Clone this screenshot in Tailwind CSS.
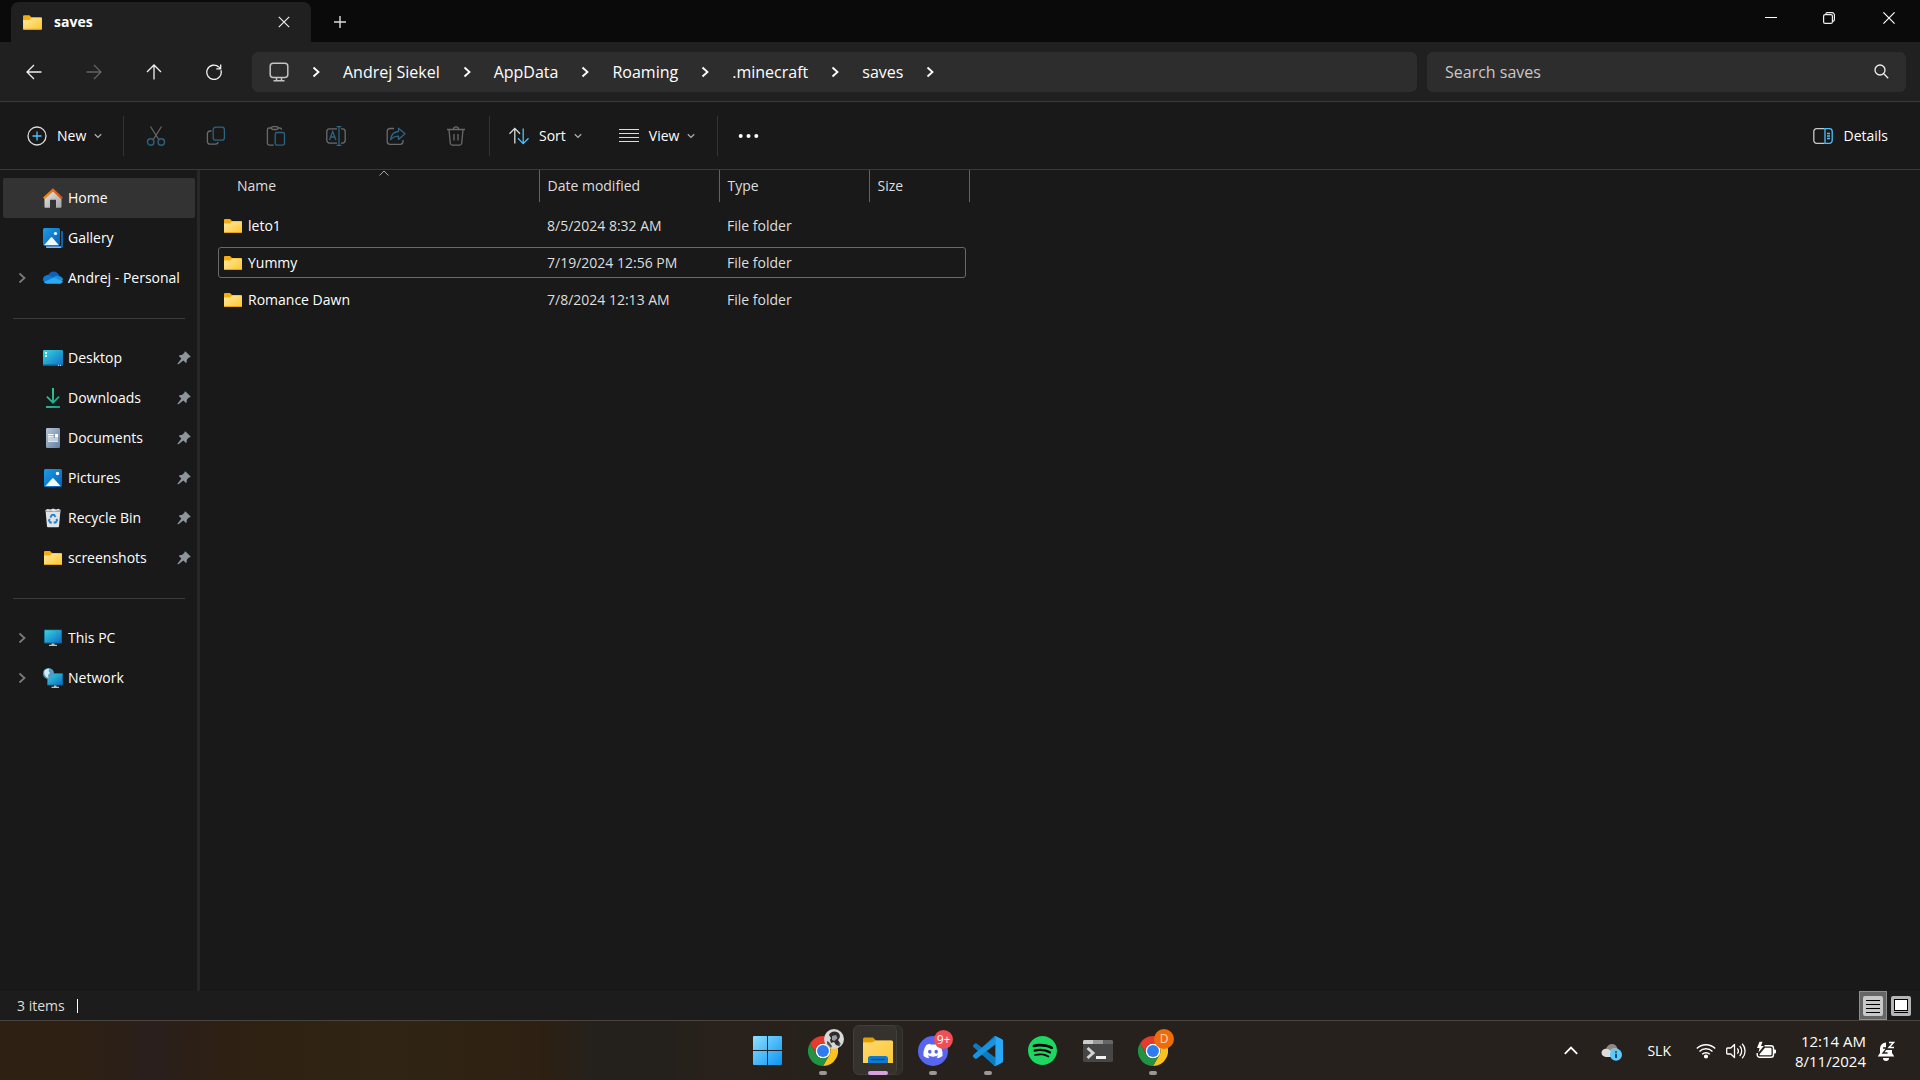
<!DOCTYPE html>
<html lang="en">
<head>
    <meta charset="UTF-8">
    <meta name="viewport" content="width=device-width, initial-scale=1.0">
    <title>saves - File Explorer</title>
    <script src="https://cdn.jsdelivr.net/npm/@tailwindcss/browser@4"></script>
</head>
<body class="h-screen flex flex-col overflow-hidden bg-[#191919] text-white text-sm font-['Open_Sans','Noto_Sans',sans-serif]">

    <!-- Shared icons -->
    <svg class="absolute w-0 h-0" aria-hidden="true">
        <defs>
            <linearGradient id="gFolder" x1="0" y1="0" x2="1" y2="1"><stop offset="0" stop-color="#ffe9a0"/><stop offset="1" stop-color="#fdc62f"/></linearGradient>
            <linearGradient id="gBlue" x1="0" y1="0" x2="1" y2="1"><stop offset="0" stop-color="#1c9ce8"/><stop offset="1" stop-color="#0560b4"/></linearGradient>
            <linearGradient id="gScreen" x1="0" y1="0" x2="1" y2="1"><stop offset="0" stop-color="#36d5dc"/><stop offset="1" stop-color="#0c6cc8"/></linearGradient>
            <linearGradient id="gHouse" x1="0" y1="0" x2="1" y2="1"><stop offset="0" stop-color="#e8e8e8"/><stop offset="1" stop-color="#a2a2a2"/></linearGradient>
            <linearGradient id="gRoof" x1="0" y1="0" x2="1" y2="0"><stop offset="0" stop-color="#f5921b"/><stop offset="1" stop-color="#d8480a"/></linearGradient>
            <linearGradient id="gDoc" x1="0" y1="0" x2="1" y2="1"><stop offset="0" stop-color="#b4c5d9"/><stop offset="1" stop-color="#6480a0"/></linearGradient>
            <linearGradient id="gDown" x1="0" y1="0" x2="1" y2="1"><stop offset="0" stop-color="#3bd18d"/><stop offset="1" stop-color="#0f9c94"/></linearGradient>
            <linearGradient id="gWin" gradientUnits="userSpaceOnUse" x1="0" y1="0" x2="29" y2="29"><stop offset="0" stop-color="#8fe0ff"/><stop offset="1" stop-color="#0a93f5"/></linearGradient>
        </defs>
        <symbol id="folder" viewBox="0 0 20 20">
            <path d="M1 4a1 1 0 0 1 1-1h5l2 2h9a1 1 0 0 1 1 1v3H1z" fill="#f7ac0e"/>
            <path d="M1 7.500h6l2-2h9.200a.8.800 0 0 1 .8.800V16a1 1 0 0 1-1 1H2a1 1 0 0 1-1-1z" fill="url(#gFolder)"/>
            <path d="M1 16h18a1 1 0 0 1-1 1H2a1 1 0 0 1-1-1z" fill="#e3a31c"/>
        </symbol>
        <symbol id="pin" viewBox="0 0 14 14">
            <path d="M8.500.6 13.400 5.300c.3.300.2.900-.3 1l-1.300.2-2.100 2.400c.3 1.300 0 2.300-.7 3.200L6.300 9.400 1.200 13.400.5 12.800 4.400 7.500 1.700 4.900c.8-.8 2-1.100 3.200-.8l2.400-2 .3-1.200c.1-.4.600-.6.900-.3z" fill="#8d969c"/>
        </symbol>
        <symbol id="chev-right" viewBox="0 0 8 12">
            <path d="M1.500 1.500 6.500 6l-5 4.500" fill="none" stroke="currentColor" stroke-width="1.800"/>
        </symbol>
        <symbol id="chev-down" viewBox="0 0 8 6">
            <path d="M.8 1.300 4 4.400l3.200-3.100" fill="none" stroke="#b0b0b0" stroke-width="1.300"/>
        </symbol>
        <symbol id="picture" viewBox="0 0 18 18">
            <rect width="18" height="18" rx="1.500" fill="url(#gBlue)"/>
            <path d="M1.500 17 8 9.800c.6-.6 1.300-.6 1.900 0L16.500 17z" fill="#f2f8ff"/>
            <circle cx="13.500" cy="4.500" r="1.700" fill="#fff"/>
        </symbol>
        <symbol id="chrome" viewBox="0 0 48 48">
            <circle cx="24" cy="24" r="12" fill="#fff"/>
            <path d="M24,12H44.781a23.994,23.994,0,0,0-41.564.003L13.608,30l.009-.002A11.985,11.985,0,0,1,24,12Z" fill="#e33b2e"/>
            <path d="M34.391,30.003,24.001,48A23.994,23.994,0,0,0,44.780,12.003H23.999l-.003.009A11.985,11.985,0,0,1,34.391,30.003Z" fill="#fcc31e"/>
            <path d="M13.609,30.003,3.218,12.006A23.994,23.994,0,0,0,24.003,48L34.393,30.003l-.007-.007a11.985,11.985,0,0,1-20.778.007Z" fill="#229342"/>
            <circle cx="24" cy="24" r="9.500" fill="#2f7bf0"/>
        </symbol>
    </svg>

    <!-- Title bar -->
    <header class="flex justify-between h-[42px] shrink-0 bg-[#0a0a0a]">
        <div class="flex pl-[11px] pt-[2px]">
            <div class="flex items-center w-[300px] pl-[11px] pr-[15px] rounded-t-lg bg-[#202020]">
                <svg class="size-[21px]"><use href="#folder"/></svg>
                <h1 class="flex-1 pl-[11px] font-bold">saves</h1>
                <button class="grid place-items-center size-6" aria-label="Close tab">
                    <svg class="size-3" viewBox="0 0 12 12" fill="none" stroke="#eee" stroke-width="1.200"><path d="m.8.800 10.400 10.400M11.200.8.800 11.200"/></svg>
                </button>
            </div>
            <button class="grid place-items-center w-[58px]" aria-label="New tab">
                <svg class="size-3" viewBox="0 0 12 12" stroke="#ddd" stroke-width="1.400"><path d="M6 0v12M0 6h12"/></svg>
            </button>
        </div>
        <div class="flex h-9">
            <button class="grid place-items-center w-[58px]" aria-label="Minimize">
                <svg class="size-3" viewBox="0 0 12 12"><path d="M0 5h12v1H0z" fill="#fff"/></svg>
            </button>
            <button class="grid place-items-center w-[58px]" aria-label="Restore">
                <svg class="size-3" viewBox="0 0 12 12" fill="none" stroke="#eee" stroke-width="1.200"><rect x=".6" y="2.600" width="8.800" height="8.800" rx="1.500"/><path d="M2.800 2.600V2.200A1.600 1.600 0 0 1 4.400.6H9a2.400 2.400 0 0 1 2.400 2.400v4.600A1.600 1.600 0 0 1 9.800 9.200h-.4"/></svg>
            </button>
            <button class="grid place-items-center w-[62px]" aria-label="Close">
                <svg class="size-3" viewBox="0 0 12 12" fill="none" stroke="#fff" stroke-width="1.200"><path d="m.4.400 11.200 11.200M11.600.4.400 11.600"/></svg>
            </button>
        </div>
    </header>

    <!-- Navigation row -->
    <div class="flex items-center h-[60px] shrink-0 pl-1 pr-[14px] bg-[#202020] border-b border-[#3a3a3a]">
        <button class="grid place-items-center w-[60px] h-10" aria-label="Back">
            <svg class="size-4" viewBox="0 0 16 16" fill="none" stroke="#f0f0f0" stroke-width="1.300"><path d="M15.500 8H1M8 1 1 8l7 7"/></svg>
        </button>
        <button class="grid place-items-center w-[60px] h-10" aria-label="Forward">
            <svg class="size-4" viewBox="0 0 16 16" fill="none" stroke="#636363" stroke-width="1.300"><path d="M.5 8H15M8 1l7 7-7 7"/></svg>
        </button>
        <button class="grid place-items-center w-[60px] h-10" aria-label="Up">
            <svg class="size-4" viewBox="0 0 16 16" fill="none" stroke="#f0f0f0" stroke-width="1.300"><path d="M8 15.500V1M1 8l7-7 7 7"/></svg>
        </button>
        <button class="grid place-items-center w-[60px] h-10" aria-label="Refresh">
            <svg class="size-4" viewBox="0 0 16 16" fill="none" stroke="#f0f0f0" stroke-width="1.300"><path d="M14.900 6.200A7.200 7.200 0 1 1 12.800 2.900L14.500 4.600M14.700.500v4.300h-4.400"/></svg>
        </button>
        <nav class="flex items-center flex-1 h-10 ml-2 pl-[17px] rounded-md bg-[#2d2d2d] text-base" aria-label="Address">
            <svg class="size-5" viewBox="0 0 20 20" fill="none" stroke="#c4c4c4" stroke-width="1.500"><rect x="1.200" y="1.200" width="17.600" height="14.400" rx="3"/><path d="M7.500 15.600v2.600M12.500 15.600v2.600M4.500 18.700h11"/></svg>
            <span class="grid place-items-center w-[54px]"><svg class="w-2 h-3"><use href="#chev-right"/></svg></span>
            <a href="#">Andrej Siekel</a>
            <span class="grid place-items-center w-[54px]"><svg class="w-2 h-3"><use href="#chev-right"/></svg></span>
            <a href="#">AppData</a>
            <span class="grid place-items-center w-[54px]"><svg class="w-2 h-3"><use href="#chev-right"/></svg></span>
            <a href="#">Roaming</a>
            <span class="grid place-items-center w-[54px]"><svg class="w-2 h-3"><use href="#chev-right"/></svg></span>
            <a href="#">.minecraft</a>
            <span class="grid place-items-center w-[54px]"><svg class="w-2 h-3"><use href="#chev-right"/></svg></span>
            <a href="#">saves</a>
            <span class="grid place-items-center w-[54px]"><svg class="w-2 h-3"><use href="#chev-right"/></svg></span>
        </nav>
        <label class="flex items-center w-[479px] h-10 ml-[10px] pl-[18px] pr-[17px] rounded-md bg-[#2d2d2d]">
            <input type="text" placeholder="Search saves" aria-label="Search saves" class="flex-1 min-w-0 bg-transparent text-base placeholder:text-[#c8c8c8] outline-none">
            <svg class="size-[15px]" viewBox="0 0 15 15" fill="none" stroke="#f0f0f0" stroke-width="1.300"><circle cx="6" cy="6" r="5"/><path d="m9.800 9.800 4.400 4.400"/></svg>
        </label>
    </div>

    <!-- Command bar -->
    <div class="flex items-center h-[68px] shrink-0 pl-[27px] pr-8 border-b border-[#3a3a3a]">
        <button class="flex items-center w-24">
            <svg class="size-5" viewBox="0 0 20 20" fill="none" stroke-width="1.300"><circle cx="10" cy="10" r="9" stroke="#dcdcdc"/><path d="M10 5.500v9M5.500 10h9" stroke="#4cc2ff"/></svg>
            <span class="pl-[10px] pr-2">New</span>
            <svg class="w-2 h-[6px]"><use href="#chev-down"/></svg>
        </button>
        <span class="w-px h-10 bg-[#333]"></span>
        <div class="flex pl-[2px] pr-[3px]">
            <button disabled class="grid place-items-center w-[60px] h-10" aria-label="Cut">
                <svg class="size-5" viewBox="0 0 20 20" fill="none" stroke-width="1.200"><path d="m4.500.500 8.200 13M15.500.500l-8.200 13" stroke="#6a6a6a"/><g stroke="#2d6484" stroke-width="1.400"><circle cx="4.700" cy="16" r="3.200"/><circle cx="15.300" cy="16" r="3.200"/></g></svg>
            </button>
            <button disabled class="grid place-items-center w-[60px] h-10" aria-label="Copy">
                <svg class="size-5" viewBox="0 0 20 20" fill="none" stroke-width="1.300"><path d="M5.500 5H4a2.600 2.600 0 0 0-2.600 2.600v8A2.600 2.600 0 0 0 4 18.200h5.500A3 3 0 0 0 12.300 16" stroke="#6a6a6a"/><rect x="7.200" y="1.200" width="11.200" height="13" rx="2.500" stroke="#2d6484"/></svg>
            </button>
            <button disabled class="grid place-items-center w-[60px] h-10" aria-label="Paste">
                <svg class="size-5" viewBox="0 0 20 20" fill="none" stroke-width="1.300"><path d="M6 2H3.200a1.800 1.800 0 0 0-1.800 1.800v13.500A1.800 1.800 0 0 0 3.200 19.100h4.500M11.500 2h2.200a1.800 1.800 0 0 1 1.800 1.800" stroke="#6a6a6a"/><rect x="5.500" y=".7" width="6.500" height="2.800" rx="1.400" stroke="#6a6a6a"/><rect x="9.200" y="6.500" width="9.300" height="12.600" rx="1.800" stroke="#2d6484"/></svg>
            </button>
            <button disabled class="grid place-items-center w-[60px] h-10" aria-label="Rename">
                <svg class="size-5" viewBox="0 0 20 20" fill="none" stroke-width="1.300"><path d="M11 2.900H3.600A2.800 2.800 0 0 0 .8 5.700v8.600a2.800 2.800 0 0 0 2.800 2.800H11M15 2.900h1.400a2.800 2.800 0 0 1 2.800 2.800v8.600a2.800 2.800 0 0 1-2.800 2.800H15" stroke="#6a6a6a"/><path d="M10.500.7h5M10.500 19.300h5M13 .7v18.600M3.500 14 6.700 5.500 9.900 14M4.600 11h4.200" stroke="#2d6484"/></svg>
            </button>
            <button disabled class="grid place-items-center w-[60px] h-10" aria-label="Share">
                <svg class="size-5" viewBox="0 0 20 20" fill="none" stroke-width="1.300" stroke-linejoin="round"><path d="M8 2.500H4A2.800 2.800 0 0 0 1.200 5.300v10.200A2.800 2.800 0 0 0 4 18.300h10.200a2.800 2.800 0 0 0 2.800-2.800V14" stroke="#6a6a6a"/><path d="M12.500 2.200 19 7.800l-6.500 5.600v-3.300c-3.200 0-5.600.8-7.800 3.400.4-4.800 3-7.600 7.800-8z" stroke="#2d6484"/></svg>
            </button>
            <button disabled class="grid place-items-center w-[60px] h-10" aria-label="Delete">
                <svg class="size-5" viewBox="0 0 20 20" fill="none" stroke="#6a6a6a" stroke-width="1.300"><path d="M1 3.500h18M7.500 3.300a2.500 2.500 0 0 1 5 0M3 3.500l1.300 13.800a2 2 0 0 0 2 1.800h7.400a2 2 0 0 0 2-1.800L17 3.500M8 8v6.500M12 8v6.500"/></svg>
            </button>
        </div>
        <span class="w-px h-10 bg-[#333]"></span>
        <button class="flex items-center ml-[19px]">
            <svg class="size-5" viewBox="0 0 20 20" fill="none" stroke-width="1.300"><path d="M5.800 17.500V2.500M.5 7.700l5.300-5.300L11 7.700" stroke="#dcdcdc"/><path d="M14.200 2.500v15M9 12.300l5.200 5.300 5.300-5.300" stroke="#4cc2ff"/></svg>
            <span class="pl-[10px] pr-2">Sort</span>
            <svg class="w-2 h-[6px]"><use href="#chev-down"/></svg>
        </button>
        <button class="flex items-center ml-[37px]">
            <svg class="size-5" viewBox="0 0 20 20" stroke="#dcdcdc"><path d="M0 3.500h20M0 7.500h20M0 11.500h20M0 15.500h20"/></svg>
            <span class="pl-[10px] pr-2">View</span>
            <svg class="w-2 h-[6px]"><use href="#chev-down"/></svg>
        </button>
        <span class="w-px h-10 ml-[22px] bg-[#333]"></span>
        <button class="ml-5" aria-label="See more">
            <svg class="w-[21px] h-5" viewBox="0 0 21 20" fill="#fff"><circle cx="2.700" cy="10" r="2"/><circle cx="10.500" cy="10" r="2"/><circle cx="18.300" cy="10" r="2"/></svg>
        </button>
        <button class="flex items-center gap-[10px] ml-auto">
            <svg class="size-5" viewBox="0 0 20 20" fill="none" stroke-width="1.300"><path d="M11.500 2.700H3.600A2.800 2.800 0 0 0 .8 5.500v9a2.800 2.800 0 0 0 2.800 2.800h7.900" stroke="#c8c8c8"/><path d="M12 2.700h4.400a2.800 2.800 0 0 1 2.800 2.800v9a2.800 2.800 0 0 1-2.800 2.800H12zM14 7.500h3M14 10h3M14 12.500h3" stroke="#4cc2ff"/></svg>
            Details
        </button>
    </div>

    <!-- Sidebar + file list -->
    <main class="flex flex-1 min-h-0">
        <aside class="w-[200px] shrink-0 pt-2 pl-[3px] pr-[2px] border-r-3 border-[#272727]">
            <ul>
                <li class="flex items-center h-10 pl-10 gap-[5px] rounded-xs bg-[#333]">
                    <svg class="size-5" viewBox="0 0 20 20"><path d="M1.500 9.500 10 2l8.500 7.500v9.300a1 1 0 0 1-1 1H13v-8H7v8H2.500a1 1 0 0 1-1-1z" fill="url(#gHouse)"/><path d="M.9 10.300 10 1.800l9.100 8.500" fill="none" stroke="url(#gRoof)" stroke-width="2.400"/></svg>
                    <a href="#">Home</a>
                </li>
                <li class="flex items-center h-10 pl-10 gap-[5px]">
                    <svg class="size-5" viewBox="0 0 20 20"><path d="M18 3h1a1 1 0 0 1 1 1v14.500a1.500 1.500 0 0 1-1.500 1.500H4a1 1 0 0 1-1-1v-1h14a1 1 0 0 0 1-1z" fill="#0f62ae"/><path d="M3 18.500h15V20H4a1 1 0 0 1-1-1z" fill="#7fb9ec"/><rect width="17" height="17.500" rx="1.500" fill="url(#gBlue)"/><path d="M1 17.200 7.600 9.800c.6-.6 1.200-.6 1.800 0L16 17.200z" fill="#f2f8ff"/><circle cx="12.500" cy="5.500" r="1.600" fill="#fff"/></svg>
                    <a href="#">Gallery</a>
                </li>
                <li class="flex items-center h-10 pl-[15px] gap-[5px]">
                    <svg class="w-2 h-3 mr-3 text-[#7a7a7a]"><use href="#chev-right"/></svg>
                    <svg class="size-5" viewBox="0 0 20 20"><path d="M5 7.500C6.200 4.800 8.600 3.200 11 3.500c2.700.3 4.700 2 5.300 4.500L9 12z" fill="#0f5fb8"/><path d="M4.500 15.500A4.400 4.400 0 0 1 0 11.300C0 8.800 2 7 4.400 6.900c1.500 0 2.500.4 3.600 1.200l5 3.400z" fill="#0f78d4"/><path d="M10 9.600c1.400-1.200 3.200-1.900 5.600-1.700 2.600.2 4.400 1.900 4.400 4.200l-4 2z" fill="#1790df"/><path d="m10.500 9.400 9.400 3.600a3.500 3.500 0 0 1-3.500 2.800H4.300c-1.500 0-2.600-.7-3.300-1.700z" fill="#2aaaf0"/></svg>
                    <a href="#" class="whitespace-nowrap">Andrej - Personal</a>
                </li>
            </ul>
            <div class="flex items-center h-10 px-[10px]"><hr class="w-full border-[#3c3c3c]"></div>
            <ul>
                <li class="flex items-center h-10 pl-10 pr-1 gap-[5px]">
                    <svg class="size-5" viewBox="0 0 20 20"><rect y="2" width="20" height="16" rx="1.200" fill="url(#gScreen)"/><path d="M0 16.500h20v.5a1 1 0 0 1-1 1H1a1 1 0 0 1-1-1z" fill="#0d5c8c"/><path d="M2 4h2v2H2zM2 7h2v2H2zM15 16.800h1v1h-1zM17 16.800h1v1h-1z" fill="#e9fbff"/></svg>
                    <a href="#" class="flex-1">Desktop</a>
                    <svg class="size-[14px]"><use href="#pin"/></svg>
                </li>
                <li class="flex items-center h-10 pl-10 pr-1 gap-[5px]">
                    <svg class="size-5" viewBox="0 0 20 20"><path d="M9 0h2v12.500l4.500-4.500 1.200 1.300L10 16 3.300 9.300 4.500 8 9 12.500zM3 18h14v2H3z" fill="url(#gDown)"/></svg>
                    <a href="#" class="flex-1">Downloads</a>
                    <svg class="size-[14px]"><use href="#pin"/></svg>
                </li>
                <li class="flex items-center h-10 pl-10 pr-1 gap-[5px]">
                    <svg class="size-5" viewBox="0 0 20 20"><rect x="3" width="14" height="20" rx="1.200" fill="url(#gDoc)"/><path d="M5 6h5.500v1.200H5zM5 8.200h5.500v1.200H5zM12 6h3v3.400h-3zM5 10.400h10v1.200H5zM5 12.600h10v1.200H5z" fill="#fff"/></svg>
                    <a href="#" class="flex-1">Documents</a>
                    <svg class="size-[14px]"><use href="#pin"/></svg>
                </li>
                <li class="flex items-center h-10 pl-10 pr-1 gap-[5px]">
                    <svg class="size-5" viewBox="0 0 20 20"><use href="#picture" x="1" y="1" width="18" height="18"/></svg>
                    <a href="#" class="flex-1">Pictures</a>
                    <svg class="size-[14px]"><use href="#pin"/></svg>
                </li>
                <li class="flex items-center h-10 pl-10 pr-1 gap-[5px]">
                    <svg class="size-5" viewBox="0 0 20 20"><path d="m2.500 2 2-1 3 .5 2.500-1 3 1 2.500-.7 2 1.200L16 18.500a1 1 0 0 1-1 .8H5a1 1 0 0 1-1-.8z" fill="#dfe3e6"/><path d="m2.500 2 2.500 1.200L8 2.500l3 .9 3-.9 3.500-.5-.3 2H2.800z" fill="#9da3a8"/><path d="M7.300 9.500 9 6.900h2.200l1.300 2M13.400 10.800l.6 1.500-1.400 2.200h-2M8.800 14.500H7.200L6 12.400l.7-1.500" fill="none" stroke="#1683d8" stroke-width="1.800"/></svg>
                    <a href="#" class="flex-1">Recycle Bin</a>
                    <svg class="size-[14px]"><use href="#pin"/></svg>
                </li>
                <li class="flex items-center h-10 pl-10 pr-1 gap-[5px]">
                    <svg class="size-5"><use href="#folder"/></svg>
                    <a href="#" class="flex-1">screenshots</a>
                    <svg class="size-[14px]"><use href="#pin"/></svg>
                </li>
            </ul>
            <div class="flex items-center h-10 px-[10px]"><hr class="w-full border-[#3c3c3c]"></div>
            <ul>
                <li class="flex items-center h-10 pl-[15px] gap-[5px]">
                    <svg class="w-2 h-3 mr-3 text-[#7a7a7a]"><use href="#chev-right"/></svg>
                    <svg class="size-5" viewBox="0 0 20 20"><rect x="1" y="1.500" width="18" height="14" rx=".8" fill="#0f5f86"/><rect x="1.700" y="2.200" width="16.600" height="12.400" fill="url(#gScreen)"/><path d="M8.500 15.500h3v1.200H14V18H6v-1.300h2.500z" fill="#b9c4cc"/></svg>
                    <a href="#">This PC</a>
                </li>
                <li class="flex items-center h-10 pl-[15px] gap-[5px]">
                    <svg class="w-2 h-3 mr-3 text-[#7a7a7a]"><use href="#chev-right"/></svg>
                    <svg class="size-5" viewBox="0 0 20 20"><rect x="4" y="5" width="16" height="12.500" rx=".8" fill="#0f5f86"/><rect x="4.700" y="5.700" width="14.600" height="11" fill="url(#gScreen)"/><path d="M11 17.500h2.500v1.200H16V20H8.500v-1.300H11z" fill="#b9c4cc"/><circle cx="5.500" cy="5.500" r="5.500" fill="#4f9fc6"/><path d="M1.500 2.500C3 .8 5 .5 6.500.8L5.500 3l1.500 2-2 2 .5 3C2.500 9 .5 6 1.500 2.500z" fill="#d4ebf5"/></svg>
                    <a href="#">Network</a>
                </li>
            </ul>
        </aside>

        <section class="flex-1 pl-[15px]">
            <table class="table-fixed w-[754px] text-left text-[#dedede]">
                <colgroup><col class="w-[324px]"><col class="w-[180px]"><col class="w-[150px]"><col class="w-[100px]"></colgroup>
                <thead>
                    <tr class="h-8">
                        <th class="relative pl-[22px] font-normal border-r border-[#636363]">
                            Name
                            <svg class="absolute top-0 left-[164px] w-[10px] h-[6px]" viewBox="0 0 10 6" fill="none" stroke="#a8a8a8"><path d="M.5 5.500 5 1l4.500 4.500"/></svg>
                        </th>
                        <th class="pl-2 font-normal border-r border-[#636363]">Date modified</th>
                        <th class="pl-2 font-normal border-r border-[#636363]">Type</th>
                        <th class="pl-2 font-normal border-r border-[#636363]">Size</th>
                    </tr>
                </thead>
                <tbody class="before:block before:h-[5px]">
                    <tr class="h-[37px]">
                        <td class="pl-2 text-white"><div class="flex items-center gap-[5px]"><svg class="size-5"><use href="#folder"/></svg>leto1</div></td>
                        <td class="pl-2">8/5/2024 8:32 AM</td>
                        <td class="pl-2">File folder</td>
                        <td></td>
                    </tr>
                    <tr class="h-[37px] rounded-md outline outline-[#6a6a6a] -outline-offset-4">
                        <td class="pl-2 text-white"><div class="flex items-center gap-[5px]"><svg class="size-5"><use href="#folder"/></svg>Yummy</div></td>
                        <td class="pl-2">7/19/2024 12:56 PM</td>
                        <td class="pl-2">File folder</td>
                        <td></td>
                    </tr>
                    <tr class="h-[37px]">
                        <td class="pl-2 text-white"><div class="flex items-center gap-[5px]"><svg class="size-5"><use href="#folder"/></svg>Romance Dawn</div></td>
                        <td class="pl-2">7/8/2024 12:13 AM</td>
                        <td class="pl-2">File folder</td>
                        <td></td>
                    </tr>
                </tbody>
            </table>
        </section>
    </main>

    <!-- Status bar -->
    <footer class="flex items-center h-[29px] shrink-0 pl-[17px] pr-[9px] bg-[#1c1c1c]">
        <span class="text-[#dedede]">3 items</span>
        <span class="w-px h-[14px] ml-3 bg-white"></span>
        <div class="flex items-center gap-1 ml-auto">
            <button class="grid place-items-center w-7 h-[29px] border border-[#8f8f8f] bg-[#666]" aria-label="Details view">
                <svg class="size-5" viewBox="0 0 20 20"><rect width="20" height="20" rx="2" fill="#c8c8c8"/><path d="M3 4.500h14M3 8.500h14M3 12.500h14M3 16.500h14" stroke="#000"/></svg>
            </button>
            <button aria-label="Large icons view">
                <svg class="size-5" viewBox="0 0 20 20"><rect width="20" height="20" rx="2" fill="#b5b5b5"/><rect x="3.500" y="3.500" width="13" height="11" fill="#fff" stroke="#000"/><path d="M3 16.500h14" stroke="#000"/></svg>
            </button>
        </div>
    </footer>

    <!-- Taskbar -->
    <div class="grid grid-cols-[1fr_auto_1fr] items-center h-[60px] shrink-0 border-t border-[#48433e] bg-[linear-gradient(90deg,#2e2012_0%,#2e2012_4%,#2a1f1d_8%,#2e2012_12%,#302514_20%,#2e2012_28%,#24211c_31%,#24211c_35%,#2a211b_37%,#26211c_45%,#26211c_100%)]">
        <div></div>
        <div class="flex">
            <button class="grid place-items-center w-[55px] h-[59px]" aria-label="Start">
                <svg class="size-[29px]" viewBox="0 0 29 29" fill="url(#gWin)"><path d="M1 0h13v14H0V1a1 1 0 0 1 1-1zM15 0h13a1 1 0 0 1 1 1v13H15zM0 15h14v14H1a1 1 0 0 1-1-1zM15 15h14v13a1 1 0 0 1-1 1H15z"/></svg>
            </button>
            <button class="relative grid place-items-center w-[55px] h-[59px]" aria-label="Google Chrome">
                <svg class="size-[30px]"><use href="#chrome"/></svg>
                <svg class="absolute top-2 left-[29px] size-5" viewBox="0 0 20 20"><circle cx="10" cy="10" r="10" fill="#d8d8d8"/><path d="M5 6c1-3 5-4.500 8-3 2.500 1 3.500 3.500 2.500 6L14 11l2 3-1 3-3-1-2-3-3 1-1-3 1-2z" fill="#2c2c2c"/><path d="m8 7 4-1 1.500 3-3 3-2.500-1z" fill="#9a9a9a"/><path d="m3 12 2 1 3 4-1 2-4-4zM14 15l3-1-2 4z" fill="#555"/></svg>
                <span class="absolute bottom-[5px] left-6 w-2 h-1 rounded-full bg-[#9a9896]"></span>
            </button>
            <button class="relative grid place-items-center w-[55px] h-[59px]" aria-label="File Explorer">
                <span class="absolute top-1 left-[10px] w-[43px] h-[50px] rounded-md bg-[#2f2b27] border border-[#3a3632]"></span>
                <span class="absolute top-1 left-[3px] w-[44px] h-[50px] rounded-md bg-[#35312d] border border-[#423e3a]"></span>
                <svg class="relative w-[30px] h-[27px]" viewBox="0 0 30 27"><path d="M0 2a1.500 1.500 0 0 1 1.500-1.500H10L13 3.500v5H0z" fill="#e0a005"/><path d="M0 5.500h9l4-2h15.500A1.500 1.500 0 0 1 30 5v21H0z" fill="#fdc93c"/><path d="M0 5.500h9l4-2h15.500A1.500 1.500 0 0 1 30 5v21H0z" fill="url(#gFolder)" opacity=".5"/><path d="M5 21.500a2.500 2.500 0 0 1 2.500-2.500h15a2.500 2.500 0 0 1 2.500 2.500V26H5z" fill="#0f7bd0"/><path d="M8 22.500h14" stroke="#0a4d94" stroke-width="1.400"/></svg>
                <span class="absolute bottom-[5px] left-[18px] w-5 h-1 rounded-full bg-[#d9a0e2]"></span>
            </button>
            <button class="relative grid place-items-center w-[55px] h-[59px]" aria-label="Discord, 9+ notifications">
                <svg class="size-[30px]" viewBox="0 0 30 30"><circle cx="15" cy="15" r="15" fill="#5865f2"/><g transform="translate(5.400 5.400) scale(.8)"><path fill="#fff" d="M20.317 4.370a19.791 19.791 0 0 0-4.885-1.515.074.074 0 0 0-.079.037c-.211.375-.445.865-.608 1.250-1.845-.276-3.680-.276-5.487 0-.164-.393-.406-.874-.618-1.250a.077.077 0 0 0-.079-.037 19.736 19.736 0 0 0-4.885 1.515.070.070 0 0 0-.032.028C.533 9.046-.319 13.580.099 18.058a.082.082 0 0 0 .031.056c2.053 1.508 4.041 2.423 5.993 3.029a.078.078 0 0 0 .084-.028c.462-.630.873-1.295 1.226-1.994a.076.076 0 0 0-.042-.106c-.653-.248-1.274-.550-1.872-.892a.077.077 0 0 1-.008-.128c.126-.094.252-.192.372-.291a.074.074 0 0 1 .078-.011c3.928 1.793 8.180 1.793 12.061 0a.074.074 0 0 1 .079.010c.120.099.246.198.373.292a.077.077 0 0 1-.007.128 12.299 12.299 0 0 1-1.873.891.077.077 0 0 0-.041.107c.360.698.772 1.363 1.225 1.993a.076.076 0 0 0 .084.029c1.961-.607 3.950-1.522 6.002-3.029a.077.077 0 0 0 .031-.055c.500-5.177-.838-9.674-3.549-13.660a.061.061 0 0 0-.031-.029zM8.020 15.331c-1.183 0-2.157-1.086-2.157-2.419s.956-2.419 2.157-2.419c1.211 0 2.176 1.095 2.157 2.419 0 1.333-.956 2.419-2.157 2.419zm7.975 0c-1.183 0-2.157-1.086-2.157-2.419s.955-2.419 2.157-2.419c1.211 0 2.176 1.095 2.157 2.419 0 1.333-.946 2.419-2.157 2.419z"/></g></svg>
                <span class="absolute top-[9px] left-[29px] grid place-items-center size-[19px] rounded-full bg-[#f04f55] text-xs leading-none">9+</span>
                <span class="absolute bottom-[5px] left-6 w-2 h-1 rounded-full bg-[#9a9896]"></span>
            </button>
            <button class="relative grid place-items-center w-[55px] h-[59px]" aria-label="Visual Studio Code">
                <svg class="size-[30px]" viewBox="0 0 24 24"><path fill="#0a7cc4" d="M23.150 2.587 18.210.210a1.494 1.494 0 0 0-1.705.290l-9.460 8.630-4.120-3.128a.999.999 0 0 0-1.276.057L.327 7.261A1 1 0 0 0 .326 8.740L3.899 12 .326 15.260a1 1 0 0 0 .001 1.479L1.650 17.940a.999.999 0 0 0 1.276.057l4.120-3.128 9.460 8.630a1.492 1.492 0 0 0 1.704.290l4.942-2.377A1.500 1.500 0 0 0 24 20.060V3.939a1.500 1.500 0 0 0-.850-1.352zm-5.146 14.861L10.826 12l7.178-5.448z"/><path fill="#1b93dc" d="m3.900 12-3.574 3.260a1 1 0 0 0 .001 1.479l1.323 1.201a1 1 0 0 0 1.276.057L18 6.550V1z"/><path fill="#29a8f5" d="M18.210.210 23.150 2.587A1.500 1.500 0 0 1 24 3.939V20.060a1.500 1.500 0 0 1-.848 1.352L18.210 23.790a1.492 1.492 0 0 1-1.704-.290c.500.400 1.498 0 1.498-1V1.500c0-1-.998-1.400-1.498-1A1.494 1.494 0 0 1 18.210.210z"/></svg>
                <span class="absolute bottom-[5px] left-6 w-2 h-1 rounded-full bg-[#9a9896]"></span>
            </button>
            <button class="grid place-items-center w-[55px] h-[59px]" aria-label="Spotify">
                <svg class="size-[29px]" viewBox="0 0 24 24"><circle cx="12" cy="12" r="11.800" fill="#000"/><path fill="#1ed760" d="M12 0C5.400 0 0 5.400 0 12s5.400 12 12 12 12-5.400 12-12S18.660 0 12 0zm5.521 17.340c-.240.359-.660.480-1.021.240-2.820-1.740-6.360-2.101-10.561-1.141-.418.122-.779-.179-.899-.539-.120-.421.180-.780.540-.900 4.560-1.021 8.520-.600 11.640 1.320.420.180.479.659.301 1.020zm1.440-3.300c-.301.420-.841.600-1.262.300-3.239-1.980-8.159-2.580-11.939-1.380-.479.120-1.020-.120-1.140-.600-.120-.480.120-1.021.600-1.141C9.600 9.900 15 10.561 18.720 12.840c.361.181.540.780.241 1.200zm.120-3.360C15.240 8.400 8.820 8.160 5.160 9.301c-.600.179-1.200-.181-1.380-.721-.180-.601.180-1.200.720-1.381 4.260-1.260 11.280-1.020 15.721 1.621.539.300.719 1.020.419 1.560-.299.421-1.020.599-1.559.300z"/></svg>
            </button>
            <button class="grid place-items-center w-[55px] h-[59px]" aria-label="Terminal">
                <svg class="w-[30px] h-[22px]" viewBox="0 0 30 22"><rect width="30" height="22" rx="1.500" fill="#464646"/><path d="M1.500 0H10v4H0V1.500A1.500 1.500 0 0 1 1.500 0z" fill="#ccc"/><path d="M10 0h10v4H10z" fill="#999"/><path d="M20 0h8.500A1.500 1.500 0 0 1 30 1.500V4H20z" fill="#666"/><path d="m4.500 8 5.500 5-5.500 5" fill="none" stroke="#d4d4d4" stroke-width="3"/><path d="M13 16h10v3H13z" fill="#f2f2f2"/></svg>
            </button>
            <button class="relative grid place-items-center w-[55px] h-[59px]" aria-label="Google Chrome, profile D">
                <svg class="size-[30px]"><use href="#chrome"/></svg>
                <span class="absolute top-2 left-[29px] grid place-items-center size-5 rounded-full bg-[#ee6c07] text-xs leading-none text-[#ffd6b5]">D</span>
                <span class="absolute bottom-[5px] left-6 w-2 h-1 rounded-full bg-[#9a9896]"></span>
            </button>
        </div>

        <!-- System tray -->
        <div class="flex items-center justify-end pr-[25px]">
            <button aria-label="Show hidden icons">
                <svg class="w-[14px] h-[9px]" viewBox="0 0 14 9" fill="none" stroke="#fff" stroke-width="1.800"><path d="M.8 7.800 7 1.600l6.200 6.200"/></svg>
            </button>
            <svg class="w-[21px] h-5 ml-[23px]" viewBox="0 0 21 20"><path d="M5 8c.8-3 3.200-5 6-5 2.600 0 4.500 1.500 5.200 4L11 10z" fill="#8a8a8a"/><path d="M5 16a4.300 4.300 0 0 1-4.500-4.200C.5 9.500 2.300 7.700 5 7.700c3 0 4 1.800 6 3l-1 5.300z" fill="#dcdcdc"/><path d="M9 9c2-1.500 5-2.500 7.500-1.500L19 10l-8 3z" fill="#b5b5b5"/><circle cx="15" cy="13.800" r="6" fill="#5cc8fb"/><path d="M14.200 12.700h1.600v4.300h-1.600zM14.200 10.200h1.600v1.600h-1.600z" fill="#102a3c"/></svg>
            <button class="ml-[25px]">SLK</button>
            <div class="flex items-center gap-[10px] ml-[25px]">
                <svg class="size-5" viewBox="0 0 20 20" fill="none" stroke="#fff" stroke-width="1.400"><path d="M.8 7.600a13 13 0 0 1 18.400 0M3.500 10.500a9.200 9.200 0 0 1 13 0M6.200 13.300a5.400 5.400 0 0 1 7.600 0"/><circle cx="10" cy="15.500" r="1.400" fill="#fff"/></svg>
                <svg class="size-5" viewBox="0 0 20 20" fill="none" stroke="#fff" stroke-width="1.300" stroke-linejoin="round"><path d="M8.500 3.500v13L4.800 13H1.500A.8.800 0 0 1 .7 12.200V7.800A.8.800 0 0 1 1.500 7h3.300zM11.300 7.300a4.200 4.200 0 0 1 0 5.400M13.700 5a7.300 7.300 0 0 1 0 10M16.200 2.800a10.500 10.500 0 0 1 0 14.400"/></svg>
                <svg class="size-5" viewBox="0 0 20 20"><path d="M8.500 4.700H15a2.500 2.500 0 0 1 2.500 2.500v6.600a2.500 2.500 0 0 1-2.500 2.500H3.700a2.500 2.500 0 0 1-2.500-2.500V12" fill="none" stroke="#fff" stroke-width="1.400"/><path d="M9 6.800h5.500a1 1 0 0 1 1 1v5.400a1 1 0 0 1-1 1h-10a1 1 0 0 1-1-1zM18 8.500h1a1 1 0 0 1 1 1v2a1 1 0 0 1-1 1h-1zM3.500.8 1 7h2.500l-1 4.500L7.800 5H5L6.500.8z" fill="#fff"/></svg>
            </div>
            <time class="w-[90px] text-right text-[15px] leading-5">12:14 AM<br>8/11/2024</time>
            <svg class="w-[18px] h-5 ml-[11px]" viewBox="0 0 18 20"><path d="M9 1.500a6 6 0 0 0-6 6V12L.7 15.500h16.600L15 12V9H9z" fill="#fff"/><path d="M6 17h6a3 3 0 0 1-6 0z" fill="#fff"/><path d="M6 7h4l-4 5h4.500" fill="none" stroke="#26211c" stroke-width="1.300"/><path d="M11 0h7v8h-6z" fill="#26211c"/><path d="M12 1.500h4.500l-4.500 5h5" fill="none" stroke="#fff" stroke-width="1.400"/></svg>
        </div>
    </div>
</body>
</html>
